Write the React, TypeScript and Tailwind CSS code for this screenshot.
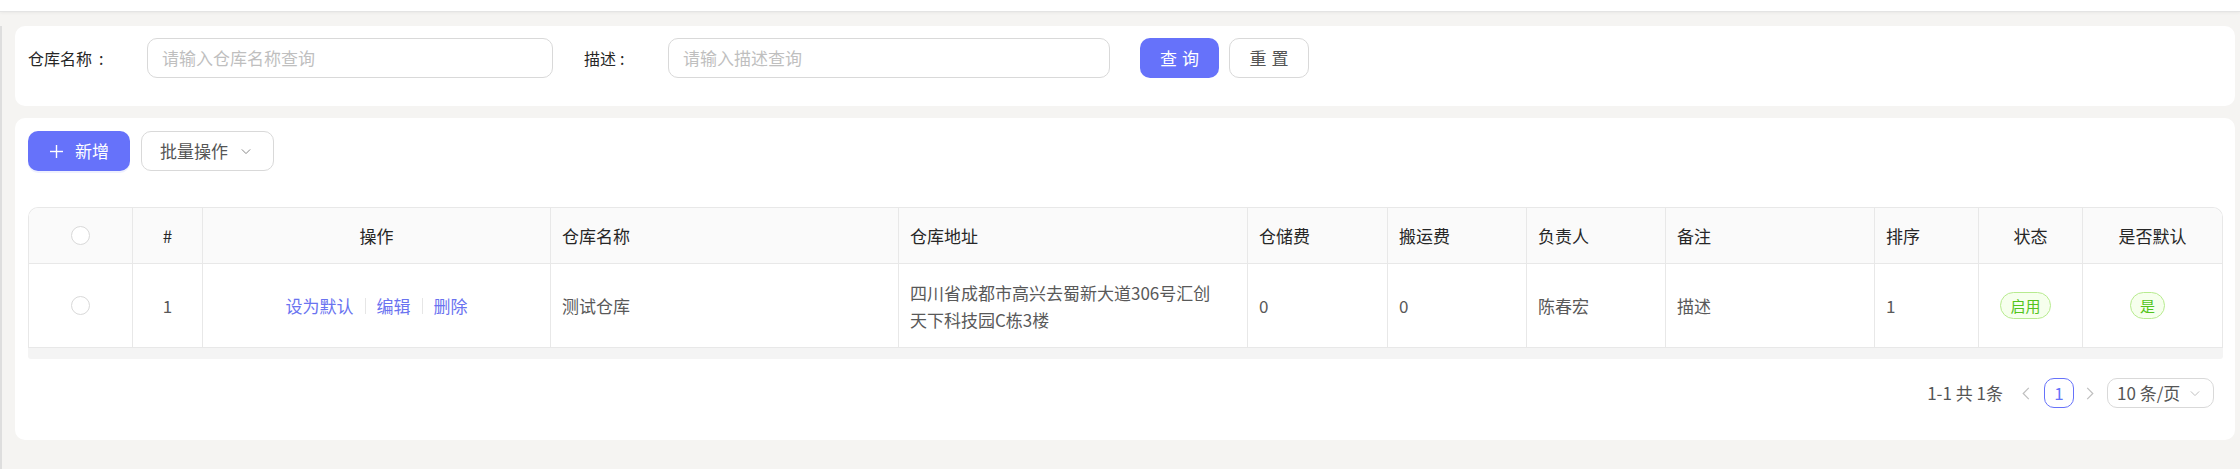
import React from "react";

const PRIMARY = "#6672fa";

function ChevronDown({ className = "" }: { className?: string }) {
  return (
    <svg className={className} viewBox="0 0 12 8" fill="none" stroke="currentColor" strokeWidth="1.2">
      <polyline points="1,1.5 6,6.5 11,1.5" />
    </svg>
  );
}

function ChevronLeft({ className = "" }: { className?: string }) {
  return (
    <svg className={className} viewBox="0 0 8 14" fill="none" stroke="currentColor" strokeWidth="1.3">
      <polyline points="7,1 1,7 7,13" />
    </svg>
  );
}

function ChevronRight({ className = "" }: { className?: string }) {
  return (
    <svg className={className} viewBox="0 0 8 14" fill="none" stroke="currentColor" strokeWidth="1.3">
      <polyline points="1,1 7,7 1,13" />
    </svg>
  );
}

function Radio() {
  return <span className="block w-[19px] h-[19px] rounded-full border border-[#d9d9d9] bg-white" />;
}

function Tag({ children }: { children: React.ReactNode }) {
  return (
    <span className="inline-flex items-center h-[27px] px-[9px] mr-[10px] rounded-full border border-[#b7eb8f] bg-[#f6ffed] text-[#52c41a] text-[15px] leading-none">
      {children}
    </span>
  );
}

type Col = { w: string; title: string; align: "center" | "left" };

const cols: Col[] = [
  { w: "w-[104px]", title: "", align: "center" },
  { w: "w-[70px]", title: "#", align: "center" },
  { w: "w-[348px]", title: "操作", align: "center" },
  { w: "w-[348px]", title: "仓库名称", align: "left" },
  { w: "w-[349px]", title: "仓库地址", align: "left" },
  { w: "w-[140px]", title: "仓储费", align: "left" },
  { w: "w-[139px]", title: "搬运费", align: "left" },
  { w: "w-[139px]", title: "负责人", align: "left" },
  { w: "w-[209px]", title: "备注", align: "left" },
  { w: "w-[104px]", title: "排序", align: "left" },
  { w: "w-[104px]", title: "状态", align: "center" },
  { w: "flex-1", title: "是否默认", align: "center" },
];

function Cell({ col, last, children }: { col: Col; last: boolean; children: React.ReactNode }) {
  return (
    <div
      className={`${col.w} shrink-0 flex items-center px-[11px] ${
        col.align === "center" ? "justify-center" : "justify-start"
      } ${last ? "" : "border-r border-[#e8e8e8]"}`}
    >
      {children}
    </div>
  );
}

export default function App() {
  const rowCells: React.ReactNode[] = [
    <Radio key="r" />,
    <span key="n">1</span>,
    <div key="ops" className="flex items-center text-[#6a73f0]">
      <span>设为默认</span>
      <span className="mx-[11px] w-px h-[16px] bg-[#e6e6e6]" />
      <span>编辑</span>
      <span className="mx-[11px] w-px h-[16px] bg-[#e6e6e6]" />
      <span>删除</span>
    </div>,
    <span key="name">测试仓库</span>,
    <div key="addr" className="leading-[27px]">
      四川省成都市高兴去蜀新大道306号汇创
      <br />
      天下科技园C栋3楼
    </div>,
    <span key="f1">0</span>,
    <span key="f2">0</span>,
    <span key="p">陈春宏</span>,
    <span key="d">描述</span>,
    <span key="s">1</span>,
    <Tag key="t1">启用</Tag>,
    <Tag key="t2">是</Tag>,
  ];

  return (
    <div className="min-h-screen w-full bg-[#f5f4f2] font-['Noto_Sans_CJK_SC','Noto_Sans',sans-serif] text-[#595959]">
      {/* top bar */}
      <div className="h-[12px] bg-white border-b border-[#e4e4e4] shadow-[0_1px_3px_rgba(0,0,0,0.05)]" />

      <div className="border-l-2 border-[#dedede] pb-[29px]">
        {/* search card */}
        <div className="mt-[14px] ml-[13px] mr-[5px] rounded-[10px] bg-white pl-[13px] pt-[12px] pb-[28px] flex items-center">
          <div className="w-[119px] shrink-0 text-[16px] text-[#262626] flex items-center">
            <span>仓库名称</span>
            <span className="ml-[7px]">:</span>
          </div>
          <div className="w-[406px] h-[40px] shrink-0 rounded-[10px] border border-[#d9d9d9] flex items-center pl-[14px] text-[17px] text-[#bfbfbf]">
            请输入仓库名称查询
          </div>
          <div className="ml-[31px] w-[84px] shrink-0 text-[16px] text-[#262626] flex items-center">
            <span>描述</span>
            <span className="ml-[4px]">:</span>
          </div>
          <div className="w-[442px] h-[40px] shrink-0 rounded-[10px] border border-[#d9d9d9] flex items-center pl-[14px] text-[17px] text-[#bfbfbf]">
            请输入描述查询
          </div>
          <button className="ml-[30px] w-[79px] h-[40px] rounded-[10px] bg-[#6672fa] text-white text-[17px] flex items-center justify-center gap-[5px]">
            <span>查</span>
            <span>询</span>
          </button>
          <button className="ml-[10px] w-[80px] h-[40px] rounded-[10px] border border-[#d9d9d9] bg-white text-[#555555] text-[17px] flex items-center justify-center gap-[5px]">
            <span>重</span>
            <span>置</span>
          </button>
        </div>

        {/* table card */}
        <div className="mt-[12px] ml-[13px] mr-[5px] rounded-[10px] bg-white pl-[13px] pr-[12px] pt-[13px] pb-[32px]">
          <div className="flex items-center">
            <button className="w-[102px] h-[40px] rounded-[10px] bg-[#6672fa] text-white text-[17px] flex items-center pl-[22px] shadow-[0_2px_0_rgba(102,114,250,0.1)]">
              <svg className="w-[13px] h-[13px]" viewBox="0 0 13 13" fill="none" stroke="currentColor" strokeWidth="1.4">
                <line x1="6.5" y1="0" x2="6.5" y2="13" />
                <line x1="0" y1="6.5" x2="13" y2="6.5" />
              </svg>
              <span className="ml-[12px]">新增</span>
            </button>
            <button className="ml-[11px] w-[133px] h-[40px] rounded-[10px] border border-[#d9d9d9] bg-white text-[#555555] text-[17px] flex items-center pl-[18px]">
              <span>批量操作</span>
              <ChevronDown className="ml-[13px] w-[10px] h-[7px] text-[#888888]" />
            </button>
          </div>

          {/* table */}
          <div className="mt-[36px] text-[17px]">
            <div className="rounded-t-[10px] border-t border-l border-r border-[#e8e8e8] overflow-hidden">
              <div className="flex h-[56px] bg-[#fafafa] border-b border-[#e8e8e8] text-[#262626]">
                {cols.map((c, i) => (
                  <Cell key={i} col={c} last={i === cols.length - 1}>
                    {i === 0 ? <Radio /> : <span>{c.title}</span>}
                  </Cell>
                ))}
              </div>
              <div className="flex h-[84px] bg-white border-b border-[#e8e8e8] text-[#595959]">
                {cols.map((c, i) => (
                  <Cell key={i} col={c} last={i === cols.length - 1}>
                    {rowCells[i]}
                  </Cell>
                ))}
              </div>
            </div>
            <div className="h-[11px] bg-[#f4f4f4] rounded-b-[3px]" />
          </div>

          {/* pagination */}
          <div className="mt-[19px] flex items-center justify-end pr-[9px] text-[17px] text-[#555555]">
            <span>1-1 共 1条</span>
            <div className="ml-[8px] w-[30px] h-[30px] flex items-center justify-center text-[#bfbfbf]">
              <ChevronLeft className="w-[8px] h-[13px]" />
            </div>
            <div className="ml-[3px] w-[30px] h-[30px] rounded-[10px] border border-[#6672fa] text-[#6672fa] flex items-center justify-center">
              1
            </div>
            <div className="ml-[1px] w-[29px] h-[30px] flex items-center justify-center text-[#bfbfbf]">
              <ChevronRight className="w-[8px] h-[13px]" />
            </div>
            <div className="ml-[3px] w-[107px] h-[30px] rounded-[10px] border border-[#d9d9d9] flex items-center pl-[9px]">
              <span>10 条/页</span>
              <ChevronDown className="ml-[10px] w-[10px] h-[7px] text-[#bfbfbf]" />
            </div>
          </div>
        </div>
      </div>
    </div>
  );
}
